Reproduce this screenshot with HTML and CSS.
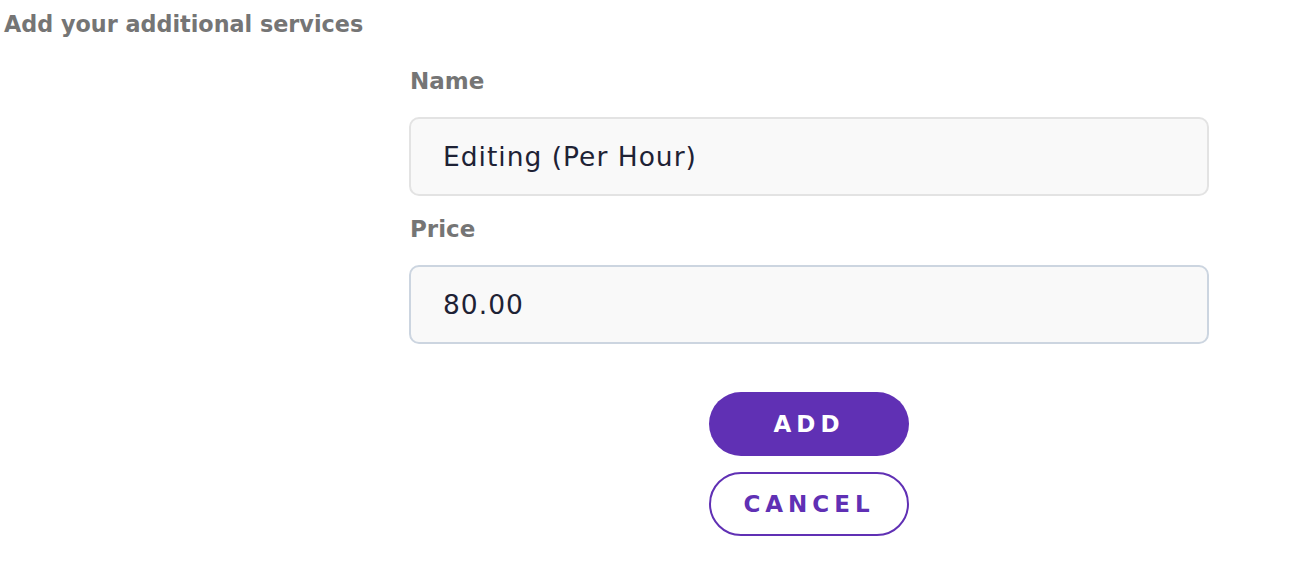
FILE: index.html
```html
<!DOCTYPE html>
<html lang="en">
<head>
    <meta charset="UTF-8">
    <meta name="viewport" content="width=device-width, initial-scale=1.0">
    <title>Additional Services</title>
    <link rel="stylesheet" href="styles.css">
</head>
<body>
    <h2 class="page-title">Add your additional services</h2>

    <form class="service-form" onsubmit="return false">
        <div class="field">
            <label for="serviceName">Name</label>
            <input type="text" id="serviceName" value="Editing (Per Hour)">
        </div>
        <div class="field">
            <label for="servicePrice">Price</label>
            <input type="text" id="servicePrice" class="price-input" value="80.00">
        </div>
        <div class="actions">
            <button type="submit" class="btn btn-primary">Add</button>
            <button type="button" class="btn btn-outline">Cancel</button>
        </div>
    </form>
</body>
</html>
```

FILE: styles.css
```css
body {
    font-family: 'DejaVu Sans', 'Noto Sans', sans-serif;
    background-color: #ffffff;
    color: #1e2235;
    margin: 0;
    padding: 0;
}
.page-title {
    margin: 0;
    padding: 9px 0 0 4px;
    font-size: 22.3px;
    line-height: 30px;
    font-weight: 700;
    color: #757575;
}
.service-form {
    margin: 28px 0 0 409px;
    width: 800px;
}
.field {
    margin-bottom: 19px;
}
.field label {
    display: block;
    margin-left: 1px;
    font-size: 23px;
    line-height: 28px;
    font-weight: 700;
    color: #757575;
    margin-bottom: 22px;
}
.field input {
    display: block;
    width: 100%;
    height: 79px;
    box-sizing: border-box;
    padding: 0 32px;
    border: 2px solid #e3e3e3;
    border-radius: 10px;
    background-color: #f9f9f9;
    font-family: inherit;
    font-size: 26.5px;
    letter-spacing: 1px;
    color: #1e2235;
}
.field input.price-input {
    border-color: #ccd5e0;
}
.field input:focus {
    outline: none;
}
.actions {
    display: flex;
    flex-direction: column;
    align-items: center;
    gap: 16px;
    margin-top: 48px;
}
.btn {
    width: 200px;
    height: 64px;
    padding: 0;
    border-radius: 32px;
    box-sizing: border-box;
    font-family: inherit;
    font-size: 23px;
    font-weight: 700;
    letter-spacing: 5px;
    text-transform: uppercase;
    cursor: pointer;
}
.btn-primary {
    background-color: #6030b4;
    color: #ffffff;
    border: none;
}
.btn-outline {
    background-color: #ffffff;
    color: #6030b4;
    border: 2px solid #6030b4;
}
```
